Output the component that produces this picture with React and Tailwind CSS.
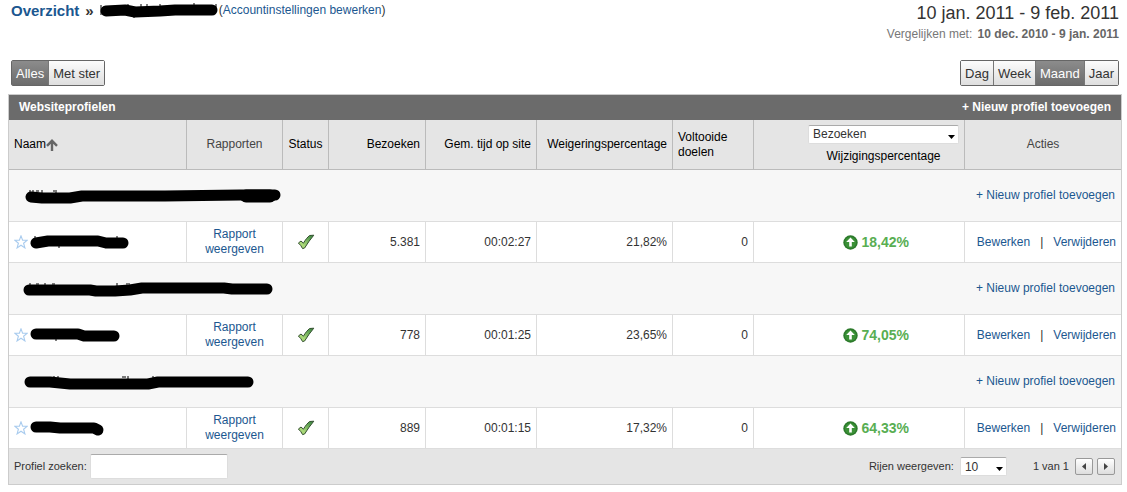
import React from "react";

const groups = [
  {
    site: { d: "M7 13L18 14H46L58 12H141L216 11L251 11", thick: "M222 12H246", specks: "M5 7h2M9 6v3M12 7h3M18 6v3M29 7h2M32 6v3" },
    profile: { d: "M6 11L18 9H68L76 11H93", specks: "M5 4v2M28 15h2M87 4v2" },
    visits: "5.381",
    time: "00:02:27",
    bounce: "21,82%",
    goals: "0",
    change: "18,42%",
  },
  {
    site: { d: "M5 13H66L72 14H91L106 13L118 11H200L208 12H243", specks: "M5 7h2M12 7h3M20 7h2M28 7h3M93 6v3M102 7h4" },
    profile: { d: "M6 9H48L54 11H84", specks: "M25 15h2" },
    visits: "778",
    time: "00:01:25",
    bounce: "23,65%",
    goals: "0",
    change: "74,05%",
  },
  {
    site: { d: "M6 12H26L46 14H124L134 12H224", specks: "M30 6v3M33 7h2M98 7h4M104 6v3M129 6v3" },
    profile: { d: "M6 9H20L30 10H64L68 12", specks: "" },
    visits: "889",
    time: "00:01:15",
    bounce: "17,32%",
    goals: "0",
    change: "64,33%",
  },
];

const Marker = ({ d, thick, specks, className }) => (
  <svg className={className} fill="none" stroke="#000" strokeLinecap="round" strokeLinejoin="round" aria-hidden="true">
    <path d={d} strokeWidth="11" />
    {thick && <path d={thick} strokeWidth="13" />}
    {specks && <path d={specks} strokeWidth="1" strokeLinecap="butt" />}
  </svg>
);

const StarIcon = () => (
  <svg className="w-[14px] h-[14px] shrink-0" viewBox="0 0 14 14" fill="#fff" stroke="#a8cbee" strokeWidth="1.1">
    <path d="M7 .9L8.6 5.2L13.2 5.3L9.6 8.2L10.9 12.9L7 10.2L3.1 12.9L4.4 8.2L.8 5.3L5.4 5.2Z" />
  </svg>
);

const CheckIcon = () => (
  <svg className="w-[18px] h-4 mx-auto" viewBox="0 0 18 16">
    <defs>
      <linearGradient id="check" x1="0" y1="1" x2="1" y2="0">
        <stop offset="0.3" stopColor="#a9d878" />
        <stop offset="0.9" stopColor="#3f8a42" />
      </linearGradient>
    </defs>
    <path
      d="M1.4 9L4 7L6.4 9.2C8.4 5.8 10.4 3.2 12.6 1.5L16.8 1.2C13.4 5 10.4 9.6 7.6 14L5.6 14.6C4.5 12.3 3.2 10.6 1.4 9Z"
      fill="url(#check)"
      stroke="#33502f"
      strokeWidth="1"
      strokeLinejoin="round"
    />
  </svg>
);

const UpIcon = () => (
  <svg className="w-[15px] h-[15px]" viewBox="0 0 15 15">
    <circle cx="7.5" cy="7.5" r="7.2" fill="#2c7a2b" />
    <circle cx="7.5" cy="7.5" r="5.6" fill="#3b9137" />
    <path d="M7.5 2.4L11.8 7H8.8V11.6H6.2V7H3.2Z" fill="#fff" />
  </svg>
);

const Caret = () => (
  <svg className="absolute right-1 top-1/2 w-[7px] h-1 pointer-events-none" viewBox="0 0 7 4">
    <path d="M0 0H7L3.5 4Z" fill="#000" />
  </svg>
);

const Segments = ({ items, active, label }) => (
  <div role="group" aria-label={label} className="flex border border-[#666] rounded-xs divide-x divide-[#777]">
    {items.map((item) => (
      <button
        key={item}
        type="button"
        aria-pressed={item === active}
        className={
          item === active
            ? "h-6 px-1 text-[13px] text-white bg-linear-to-b from-[#8c8c8c] to-[#6c6c6c]"
            : "h-6 px-1 text-[13px] text-[#333] bg-linear-to-b from-[#fcfcfc] to-[#dedede]"
        }
      >
        {item}
      </button>
    ))}
  </div>
);

const headCell = "border-r border-b border-[#bbb] px-[5px] font-normal";
const cell = "border-r border-b border-[#ddd] px-[5px]";
const link = "text-[#1b5790] hover:underline";
const field = "bg-white border border-[#ddd] border-t-[#aaa] rounded-xs";
const pager = "w-[18px] h-[17px] grid place-items-center border border-[#999] rounded-xs bg-linear-to-b from-white to-[#ddd]";

const App = () => {
  return (
    <div className="bg-white text-[#333] text-xs leading-[15px] font-['Liberation_Sans',Arial,sans-serif]">
      <header className="flex justify-between pl-[11px] pr-2">
        <div className="flex items-center h-5">
          <h1 className="flex items-center gap-1.5 text-[15px] font-bold">
            <a href="#overzicht" className="text-[#1b5790]">Overzicht</a>
            <span>»</span>
          </h1>
          <Marker
            className="w-[118px] h-5 ml-1.5"
            d="M6 11L25 10L35 12L60 11L75 10H112"
            specks="M1 5v10M28 4v3M41 4v3M47 4v3M60 4v3M94 3v3M116 4v3M34 17v1"
          />
          <span className="ml-px">
            (<a href="#account" className={link}>Accountinstellingen bewerken</a>)
          </span>
        </div>
        <div className="text-right">
          <p className="text-lg leading-[26px]">10 jan. 2011 - 9 feb. 2011</p>
          <p className="leading-4 text-[#777]">
            Vergelijken met: <b className="ml-0.5 text-[#666]">10 dec. 2010 - 9 jan. 2011</b>
          </p>
        </div>
      </header>

      <div className="flex justify-between pl-[11px] pr-2 mt-[18px]">
        <Segments label="Filter" items={["Alles", "Met ster"]} active="Alles" />
        <Segments label="Periode" items={["Dag", "Week", "Maand", "Jaar"]} active="Maand" />
      </div>

      <main className="mt-2 ml-2 mr-[5px] border border-[#ccc]">
        <div className="flex items-center justify-between h-[25px] px-[10px] bg-[#6b6b6b] text-white font-bold">
          <h2>Websiteprofielen</h2>
          <a href="#nieuw">+ Nieuw profiel toevoegen</a>
        </div>

        <table className="w-full table-fixed border-separate border-spacing-0">
          <colgroup>
            <col />
            <col className="w-24" />
            <col className="w-[46px]" />
            <col className="w-[97px]" />
            <col className="w-[111px]" />
            <col className="w-[136px]" />
            <col className="w-[81px]" />
            <col className="w-[211px]" />
            <col className="w-[156px]" />
          </colgroup>
          <thead className="bg-[#e5e5e5] text-black">
            <tr className="h-[50px]">
              <th className={`${headCell} text-left`}>
                <span className="flex items-center">
                  Naam
                  <svg className="w-3 h-3" viewBox="0 0 12 12" fill="none" stroke="#666" strokeWidth="2.4">
                    <path d="M6 12V2M1 6.8L6 1.8L11 6.8" />
                  </svg>
                </span>
              </th>
              <th className={`${headCell} text-[#444]`}>Rapporten</th>
              <th className={headCell}>Status</th>
              <th className={`${headCell} text-right`}>Bezoeken</th>
              <th className={`${headCell} text-right`}>Gem. tijd op site</th>
              <th className={`${headCell} text-right`}>Weigeringspercentage</th>
              <th className={`${headCell} text-left`}>Voltooide doelen</th>
              <th className={headCell}>
                <div className="flex flex-col gap-[5px] w-[151px] ml-auto">
                  <div className="relative">
                    <select id="metric" className={`${field} block appearance-none w-full h-[19px] px-1 text-[#333]`}>
                      <option>Bezoeken</option>
                    </select>
                    <Caret />
                  </div>
                  <label htmlFor="metric">Wijzigingspercentage</label>
                </div>
              </th>
              <th className="border-b border-[#bbb] font-normal text-[#444]">Acties</th>
            </tr>
          </thead>
          <tbody>
            {groups.map((g) => (
              <React.Fragment key={g.visits}>
                <tr className="h-[52px] bg-[#f7f7f7]">
                  <td colSpan={7} className="border-b border-[#ddd] pl-[15px]">
                    <Marker {...g.site} className="block w-64 h-6 overflow-visible" />
                  </td>
                  <td colSpan={2} className="border-b border-[#ddd] pr-1.5 text-right">
                    <a href="#nieuw" className={link}>+ Nieuw profiel toevoegen</a>
                  </td>
                </tr>
                <tr className="h-[41px]">
                  <td className={cell}>
                    <div className="flex items-center gap-0.5">
                      <StarIcon />
                      <Marker {...g.profile} className="w-[100px] h-5" />
                    </div>
                  </td>
                  <td className={`${cell} text-center`}>
                    <a href="#rapport" className={link}>Rapport weergeven</a>
                  </td>
                  <td className={cell}><CheckIcon /></td>
                  <td className={`${cell} text-right`}>{g.visits}</td>
                  <td className={`${cell} text-right`}>{g.time}</td>
                  <td className={`${cell} text-right`}>{g.bounce}</td>
                  <td className={`${cell} text-right`}>{g.goals}</td>
                  <td className={cell}>
                    <div className="flex items-center justify-end gap-1 pr-[50px] text-sm leading-4 font-bold text-[#58ae52]">
                      <UpIcon />
                      {g.change}
                    </div>
                  </td>
                  <td className="border-b border-[#ddd]">
                    <div className="flex justify-end gap-2.5 pr-[5px]">
                      <a href="#bewerken" className={link}>Bewerken</a>
                      <span>|</span>
                      <a href="#verwijderen" className={link}>Verwijderen</a>
                    </div>
                  </td>
                </tr>
              </React.Fragment>
            ))}
          </tbody>
        </table>

        <div className="flex items-center justify-between h-[35px] pl-[5px] pr-1.5 bg-[#e5e5e5] text-[11px]">
          <div className="flex items-center gap-[3px]">
            <label htmlFor="search">Profiel zoeken:</label>
            <input id="search" type="text" className={`${field} w-[138px] h-[25px] px-1`} />
          </div>
          <div className="flex items-center">
            <label htmlFor="rows">Rijen weergeven:</label>
            <div className="relative ml-1.5">
              <select id="rows" className={`${field} block appearance-none w-[47px] h-[19px] px-1 text-xs`}>
                <option>10</option>
              </select>
              <Caret />
            </div>
            <span className="ml-[26px] mr-1.5">1 van 1</span>
            <div className="flex gap-1">
              <button type="button" aria-label="Vorige" className={pager}>
                <svg className="w-1 h-[7px]" viewBox="0 0 4 7"><path d="M4 0V7L0 3.5Z" fill="#444" /></svg>
              </button>
              <button type="button" aria-label="Volgende" className={pager}>
                <svg className="w-1 h-[7px]" viewBox="0 0 4 7"><path d="M0 0V7L4 3.5Z" fill="#444" /></svg>
              </button>
            </div>
          </div>
        </div>
      </main>
    </div>
  );
};

export default App;
